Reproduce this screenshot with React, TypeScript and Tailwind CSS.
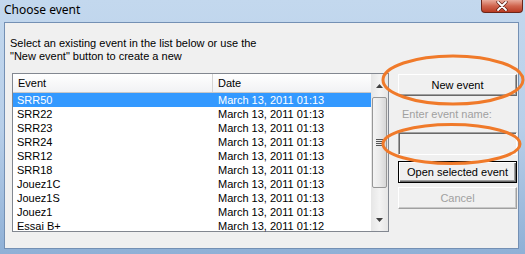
const rows: [string, string][] = [
  ["SRR50", "March 13, 2011 01:13"],
  ["SRR22", "March 13, 2011 01:13"],
  ["SRR23", "March 13, 2011 01:13"],
  ["SRR24", "March 13, 2011 01:13"],
  ["SRR12", "March 13, 2011 01:13"],
  ["SRR18", "March 13, 2011 01:13"],
  ["Jouez1C", "March 13, 2011 01:13"],
  ["Jouez1S", "March 13, 2011 01:13"],
  ["Jouez1", "March 13, 2011 01:13"],
  ["Essai B+", "March 13, 2011 01:12"],
];

export default function App() {
  return (
    <div className="relative w-[525px] h-[254px] overflow-hidden bg-gradient-to-b from-[#c3d8ee] via-[#b8cfe9] to-[#8fb0d6] font-['Liberation_Sans',Arial,sans-serif] text-black">
      {/* title bar */}
      <div className="h-[22px] pl-[4px] pt-[2px] text-[12px] leading-[16px] font-['Noto_Sans',sans-serif] text-black">
        Choose event
      </div>
      {/* close button */}
      <div className="absolute left-[481px] top-0 w-[42px] h-[13px] rounded-b-[4px] border border-t-0 border-[#6b2519] bg-gradient-to-b from-[#e8ab9c] via-[#d0654e] to-[#b93a22] flex items-center justify-center">
        <svg width="12" height="10" viewBox="0 0 12 10">
          <path d="M2 1 L10 9 M10 1 L2 9" stroke="#5a1d12" strokeWidth="3.2" strokeLinecap="round" />
          <path d="M2 1 L10 9 M10 1 L2 9" stroke="#ffffff" strokeWidth="1.8" strokeLinecap="round" />
        </svg>
      </div>
      <div className="flex">
        <div className="w-[4px]" />
        {/* client */}
        <div className="w-[515px] h-[227px] bg-[#f0f0f0] border border-[#7490b4] text-[11px]">
          <div className="pl-[5px] pt-[14px] leading-[13px]">
            <div>Select an existing event in the list below or use the</div>
            <div>"New event" button to create a new</div>
          </div>
          <div className="flex mt-[10px] pl-[7px]">
            {/* list view */}
            <div className="w-[377px] h-[159px] border border-[#828790] bg-white flex">
              <div className="w-[358px] flex flex-col">
                <div className="h-[19px] flex border-b border-[#c8c8c8] bg-gradient-to-b from-[#ffffff] to-[#f1f2f4] leading-[18px]">
                  <div className="w-[200px] pl-[5px] border-r border-[#d5d5d5]">Event</div>
                  <div className="flex-1 pl-[5px]">Date</div>
                </div>
                {rows.map(([n, d], i) => (
                  <div
                    key={n}
                    className={
                      i === 0
                        ? "h-[14px] flex leading-[14px] bg-[#3399ff] text-white shrink-0"
                        : "h-[14px] flex leading-[14px] shrink-0"
                    }
                  >
                    <div className="w-[200px] pl-[4px]">{n}</div>
                    <div className="flex-1 pl-[5px]">{d}</div>
                  </div>
                ))}
              </div>
              {/* scrollbar */}
              <div className="w-[17px] h-full bg-gradient-to-r from-[#e6e6e6] via-[#f3f3f3] to-[#e6e6e6] flex flex-col items-center">
                <div className="h-[23px] w-full flex items-center justify-center">
                  <svg width="7" height="4" viewBox="0 0 7 4">
                    <path d="M0 4 L3.5 0 L7 4 Z" fill="#404040" />
                  </svg>
                </div>
                <div className="w-[15px] h-[91px] rounded-[2px] border border-[#979797] bg-gradient-to-r from-[#f4f4f4] via-[#eaeaea] to-[#d7d7d7] flex items-center justify-center">
                  <div className="flex flex-col gap-[1px]">
                    <div className="w-[7px] h-[1px] bg-[#555]" />
                    <div className="w-[7px] h-[1px] bg-[#555]" />
                    <div className="w-[7px] h-[1px] bg-[#555]" />
                    <div className="w-[7px] h-[1px] bg-[#555]" />
                  </div>
                </div>
                <div className="flex-1" />
                <div className="h-[23px] w-full flex items-center justify-center">
                  <svg width="7" height="4" viewBox="0 0 7 4">
                    <path d="M0 0 L3.5 4 L7 0 Z" fill="#404040" />
                  </svg>
                </div>
              </div>
            </div>
            {/* right column */}
            <div className="ml-[9px] w-[119px] flex flex-col">
              <div className="mt-[1px] h-[22px] bg-[#f0f0f0] border border-t-white border-l-white border-r-[#696969] border-b-[#696969] shadow-[inset_-1px_-1px_0_#a0a0a0] flex items-center justify-center">
                New event
              </div>
              <div className="mt-[11px] pl-[4px] leading-[14px] text-[#a0a0a0]">Enter event name:</div>
              <div className="mt-[11px] h-[23px] bg-[#f0f0f0] border border-t-[#a0a0a0] border-l-[#a0a0a0] border-r-white border-b-white shadow-[inset_1px_1px_0_#696969]" />
              <div className="mt-[6px] h-[22px] bg-[#f0f0f0] border border-black shadow-[inset_1px_1px_0_#ffffff,inset_-1px_-1px_0_#696969,inset_-2px_-2px_0_#a0a0a0] flex items-center justify-center">
                Open selected event
              </div>
              <div className="mt-[4px] h-[22px] bg-[#f0f0f0] border border-t-white border-l-white border-r-[#a0a0a0] border-b-[#a0a0a0] shadow-[inset_-1px_-1px_0_#c8c8c8] flex items-center justify-center text-[#a0a0a0]">
                Cancel
              </div>
            </div>
          </div>
        </div>
      </div>
      {/* annotations */}
      <svg className="absolute left-0 top-0 pointer-events-none" width="525" height="254" viewBox="0 0 525 254">
        <ellipse cx="453" cy="80" rx="70" ry="24" fill="none" stroke="#f07a2a" strokeWidth="3" />
        <ellipse cx="451.5" cy="144" rx="68.5" ry="19.5" fill="none" stroke="#f07a2a" strokeWidth="3" />
      </svg>
    </div>
  );
}
